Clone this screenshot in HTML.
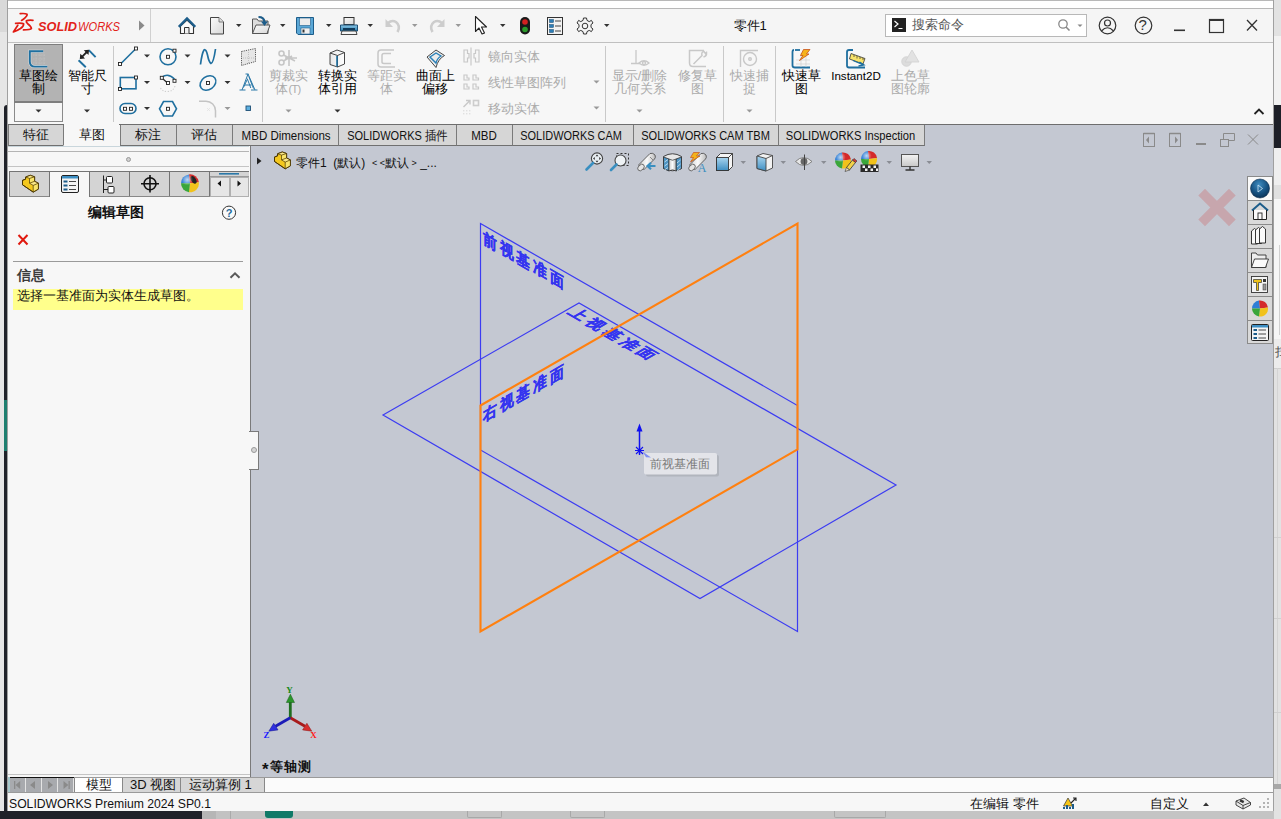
<!DOCTYPE html>
<html><head><meta charset="utf-8">
<style>
*{box-sizing:border-box;margin:0;padding:0}
html,body{width:1281px;height:819px;overflow:hidden;background:#e4e4e4;font-family:"Liberation Sans",sans-serif;font-size:12px;color:#000}
.a{position:absolute}
.t{position:absolute;white-space:nowrap;line-height:1}
</style></head><body>
<!-- desktop background -->
<div class="a" style="left:0;top:0;width:8px;height:32px;background:#d9d9d9"></div>
<div class="a" style="left:0;top:32px;width:8px;height:790px;background:#e6e6e6"></div>
<div class="a" style="left:4px;top:105px;width:4px;height:714px;background:#202229;border-radius:3px 0 0 0"></div>
<div class="a" style="left:4px;top:400px;width:4px;height:51px;background:#1e7f70"></div>
<div class="a" style="left:0;top:811px;width:1281px;height:8px;background:#c4c4c4"></div>
<div class="a" style="left:0;top:811px;width:202px;height:8px;background:#202229"></div>
<div class="a" style="left:202px;top:811px;width:14px;height:8px;background:#b6b6b6"></div>
<div class="a" style="left:216px;top:811px;width:14px;height:8px;background:#c2c2c2"></div>
<div class="a" style="left:230px;top:811px;width:1px;height:8px;background:#aaa"></div>
<div class="a" style="left:265px;top:811px;width:28px;height:7px;background:#107a68;border-radius:0 0 3px 3px"></div>
<div class="a" style="left:467px;top:810px;width:35px;height:8px;border:1px solid #a8a8a8;border-top:none;border-radius:0 0 2px 2px"></div>
<div class="a" style="left:570px;top:810px;width:35px;height:8px;border:1px solid #a8a8a8;border-top:none;border-radius:0 0 2px 2px"></div>
<div class="a" style="left:834px;top:810px;width:52px;height:8px;border:1px solid #a8a8a8;border-top:none;border-radius:0 0 2px 2px"></div>
<div class="a" style="left:1274px;top:0;width:7px;height:819px;background:#e2e2e2"></div>
<div class="a" style="left:1274px;top:36px;width:7px;height:69px;background:#f2f2f2"></div>
<div class="a" style="left:1274px;top:105px;width:7px;height:43px;background:#1e2028"></div>
<div class="a" style="left:1274px;top:148px;width:7px;height:37px;background:#efefef"></div>
<div class="a" style="left:1274px;top:185px;width:7px;height:14px;background:#e0e0e0"></div>
<div class="a" style="left:1274px;top:199px;width:7px;height:140px;background:#f6f6f6"></div>
<div class="a" style="left:1279px;top:245px;width:1px;height:90px;background:#d0d0d0"></div>
<div class="a" style="left:1274px;top:339px;width:7px;height:29px;background:#ececec"></div>
<div class="a" style="left:1274px;top:368px;width:7px;height:1px;background:#d0d0d0"></div>
<div class="a" style="left:1277px;top:368px;width:1px;height:420px;background:#d4d4d4"></div>
<div class="a" style="left:1274px;top:537px;width:7px;height:1px;background:#d0d0d0"></div>
<div class="a" style="left:1274px;top:618px;width:7px;height:1px;background:#d0d0d0"></div>
<div class="a" style="left:1274px;top:712px;width:7px;height:1px;background:#d0d0d0"></div>
<div class="a" style="left:1274px;top:784px;width:7px;height:5px;background:#a8a8a8"></div>
<div class="t" style="left:1275px;top:346px;font-size:12px;color:#555">扫</div>

<!-- window -->
<div class="a" style="left:7px;top:0;width:1267px;height:811px;background:#f5f5f5;border-left:1px solid #a0a0a0;border-right:1px solid #a0a0a0"></div>
<!-- top white strip -->
<div class="a" style="left:8px;top:0;width:1265px;height:9px;background:#fff;border-top:1px solid #b8b8b8;border-bottom:1px solid #b8b8b8"></div>

<!-- title row -->
<div id="titlerow" class="a" style="left:8px;top:9px;width:1265px;height:33px;background:#f5f5f5"></div>
<div class="a" style="left:150px;top:9px;width:1px;height:33px;background:#d0d0d0"></div>


<!-- title row content -->
<svg class="a" style="left:0;top:0" width="1281" height="42" viewBox="0 0 1281 42">
 <defs>
  <linearGradient id="gdoc" x1="0" y1="0" x2="1" y2="1"><stop offset="0" stop-color="#fafafa"/><stop offset="1" stop-color="#d8d8d8"/></linearGradient>
  <linearGradient id="gblue" x1="0" y1="0" x2="0" y2="1"><stop offset="0" stop-color="#8cc8e8"/><stop offset="1" stop-color="#2a7fb0"/></linearGradient>
 </defs>
 <!-- 3DS logo -->
 <g fill="none" stroke="#e01b12" stroke-width="1.7" stroke-linecap="round" stroke-linejoin="round">
  <path d="M20.2 13.6 Q25.5 13.2 27 14.2 Q27.6 15.6 25 17.8 Q23.5 19.3 21.5 20.4"/>
  <path d="M15.6 23.4 Q21.5 22.6 23.6 23.8 Q24 26 20.5 28.5 Q17 30.8 13.4 32 L17.8 25.3"/>
  <path d="M33 20.3 Q28 20 26.3 20.7 Q25.8 22 28 24 Q31.5 27 31.4 28.6 Q30.5 29.9 23.5 29.9"/>
 </g>
 <text x="38" y="31" font-family="Liberation Sans" font-size="13" font-weight="bold" font-style="italic" fill="#e2231a" textLength="39" lengthAdjust="spacingAndGlyphs">SOLID</text>
 <text x="78" y="31" font-family="Liberation Sans" font-size="13" font-style="italic" fill="#e2231a" textLength="42" lengthAdjust="spacingAndGlyphs">WORKS</text>
 <path d="M139 20.5 L144.5 25.5 L139 30.5 Z" fill="#8a8a8a"/>
 <!-- home -->
 <g transform="translate(178,17)">
  <path d="M2.5 16.5 V9 L9 3 L15.5 9 V16.5 Z" fill="#fafafa" stroke="#333" stroke-width="1.1"/>
  <path d="M0.8 9.8 L9 1.5 L17.2 9.8" fill="none" stroke="#1d5d8a" stroke-width="2.4" stroke-linejoin="miter"/>
  <path d="M6.5 16.5 V10.5 H11 V16.5" fill="#f0f0f0" stroke="#333" stroke-width="1"/>
 </g>
 <!-- new doc -->
 <path d="M210.5 17.5 H219 L223.5 22 V34 H210.5 Z" fill="url(#gdoc)" stroke="#444" stroke-width="1"/>
 <path d="M219 17.5 V22 H223.5" fill="#ddd" stroke="#666" stroke-width="0.8"/>
 <!-- open -->
 <g>
  <path d="M252.5 19 H257 L258.5 21 H268 V33.5 H252.5 Z" fill="#ddd" stroke="#555" stroke-width="1"/>
  <path d="M252.5 33.5 L256 25 H270 L267 33.5 Z" fill="url(#gdoc)" stroke="#555" stroke-width="1"/>
  <path d="M258.5 17 Q264 17 264.5 22" fill="none" stroke="#1d5d8a" stroke-width="2.2"/>
  <path d="M261 21.5 L264.5 26 L268 21.5 Z" fill="#1d5d8a"/>
 </g>
 <!-- save -->
 <g>
  <path d="M296.5 17.5 H313.5 V34.5 H298 L296.5 33 Z" fill="#5aa7d6" stroke="#1d5d8a" stroke-width="1"/>
  <rect x="299.5" y="18" width="11" height="7.5" fill="#ececec" stroke="#1d5d8a" stroke-width="0.6"/>
  <rect x="301" y="28" width="9" height="6" fill="#f0f0f0" stroke="#1d5d8a" stroke-width="0.6"/>
  <rect x="302.5" y="29.5" width="2" height="3" fill="#333"/>
 </g>
 <!-- print -->
 <g>
  <rect x="344" y="17.5" width="10" height="7" fill="url(#gdoc)" stroke="#333" stroke-width="1"/>
  <path d="M340.5 25 H357.5 V31 H340.5 Z" fill="url(#gblue)" stroke="#1d4f75" stroke-width="1"/>
  <rect x="343" y="28" width="12" height="2" fill="#0f3a5a"/>
  <path d="M342 31 H356 L357 34.5 H341 Z" fill="#f4f4f4" stroke="#333" stroke-width="0.9"/>
 </g>
 <!-- undo / redo -->
 <g fill="none" stroke="#cdcdcd" stroke-width="2.6">
  <path d="M388 23 Q392 19.5 396 22 Q401 26 397.5 32"/>
  <path d="M442 23 Q438 19.5 434 22 Q429 26 432.5 32"/>
 </g>
 <path d="M385.5 19 V27 H393 Z" fill="#cdcdcd"/>
 <path d="M444.5 19 V27 H437 Z" fill="#cdcdcd"/>
 <!-- select -->
 <path d="M475.5 16.5 V31.5 L479 28 L482 34 L484.5 33 L481.5 27 H486.5 Z" fill="#fff" stroke="#222" stroke-width="1.1" stroke-linejoin="round"/>
 <!-- traffic -->
 <rect x="520" y="17" width="10" height="17.5" rx="5" fill="#1a1a1a"/>
 <circle cx="525" cy="22" r="2.8" fill="#d42020"/>
 <circle cx="525" cy="29.5" r="2.8" fill="#2a9a2a"/>
 <!-- list -->
 <rect x="547.5" y="17.5" width="15" height="17" fill="#f2f2f2" stroke="#333" stroke-width="1"/>
 <g fill="#2d7cb5" stroke="#14486e" stroke-width="0.5"><rect x="549.5" y="19.5" width="4" height="3"/><rect x="549.5" y="24.5" width="4" height="3"/><rect x="549.5" y="29.5" width="4" height="3"/></g>
 <g stroke="#444" stroke-width="1"><path d="M555 21 H561 M555 26 H561 M555 31 H561"/></g>
 <!-- gear -->
 <g transform="translate(585,26)">
  <path d="M-1.5 -8 H1.5 L2 -5.6 L4.2 -4.4 L6.4 -5.6 L8 -3 L6 -1.4 V1.4 L8 3 L6.4 5.6 L4.2 4.4 L2 5.6 L1.5 8 H-1.5 L-2 5.6 L-4.2 4.4 L-6.4 5.6 L-8 3 L-6 1.4 V-1.4 L-8 -3 L-6.4 -5.6 L-4.2 -4.4 L-2 -5.6 Z" fill="#f4f4f4" stroke="#333" stroke-width="1" stroke-linejoin="round"/>
  <circle r="2.8" fill="#f4f4f4" stroke="#333" stroke-width="1"/>
 </g>
 <!-- dropdown arrows -->
 <g fill="#333">
  <path d="M236 24 H241.5 L238.75 27 Z"/><path d="M280 24 H285.5 L282.75 27 Z"/><path d="M326 24 H331.5 L328.75 27 Z"/>
  <path d="M367.5 24 H373 L370.25 27 Z"/><path d="M500 24 H505.5 L502.75 27 Z"/><path d="M604 24 H609.5 L606.75 27 Z"/>
 </g>
 <g fill="#999"><path d="M412 24 H417.5 L414.75 27 Z"/><path d="M455.5 24 H461 L458.25 27 Z"/></g>
 <!-- search box -->
 <rect x="885.5" y="14.5" width="201" height="22" fill="#fff" stroke="#b8b8b8" stroke-width="1"/>
 <rect x="892" y="18" width="14" height="14" fill="#222"/>
 <path d="M894.5 21 L898 24 L894.5 27" fill="none" stroke="#fff" stroke-width="1.2"/>
 <path d="M898.5 28.5 H902.5" stroke="#fff" stroke-width="1"/>
 <circle cx="1063" cy="24" r="4.2" fill="none" stroke="#888" stroke-width="1.3"/>
 <path d="M1066 27 L1069.5 30.5" stroke="#888" stroke-width="1.6"/>
 <path d="M1077.5 24.5 H1082.5 L1080 27 Z" fill="#888"/>
 <!-- user/help -->
 <circle cx="1107.5" cy="25.5" r="8.3" fill="none" stroke="#333" stroke-width="1.2"/>
 <circle cx="1107.5" cy="23" r="3" fill="none" stroke="#333" stroke-width="1.2"/>
 <path d="M1101.5 31 Q1107.5 24.5 1113.5 31" fill="none" stroke="#333" stroke-width="1.2"/>
 <circle cx="1143.5" cy="25.5" r="8.3" fill="none" stroke="#333" stroke-width="1.2"/>
 <!-- min max close -->
 <rect x="1174" y="29.5" width="11" height="1.6" fill="#333"/>
 <rect x="1209.5" y="19.5" width="14" height="13" fill="none" stroke="#333" stroke-width="1.2"/>
 <rect x="1209.5" y="19" width="14" height="2" fill="#333"/>
 <path d="M1247 20 L1257 30.5 M1257 20 L1247 30.5" stroke="#333" stroke-width="1.3"/>
</svg>
<div class="t" style="left:733.5px;top:18.5px;font-size:13px;color:#111">零件1</div>
<div class="t" style="left:912px;top:18px;font-size:13px;color:#555">搜索命令</div>
<div class="t" style="left:1138.5px;top:17px;font-size:15px;color:#333">?</div>

<!-- ribbon -->
<div id="ribbon" class="a" style="left:8px;top:42px;width:1265px;height:83px;background:#f7f7f7;border-top:1px solid #c0c0c0;border-bottom:1px solid #6e6e6e"></div>


<!-- ribbon content -->
<div class="a" style="left:14px;top:44px;width:49px;height:59px;background:#b3b3b3;border:1px solid #7e7e7e;border-bottom:2px solid #7e7e7e"></div>
<div class="a" style="left:14px;top:103px;width:49px;height:19px;background:#f6f6f6;border:1px solid #8a8a8a;border-top:none"></div>
<div class="t" style="left:-1.5px;width:80px;text-align:center;top:70.2px;font-size:12.8px;color:#000">草图绘</div>
<div class="t" style="left:-1.5px;width:80px;text-align:center;top:83.1px;font-size:12.8px;color:#000">制</div>
<div class="t" style="left:47px;width:80px;text-align:center;top:70.2px;font-size:12.8px;color:#000">智能尺</div>
<div class="t" style="left:47px;width:80px;text-align:center;top:83.1px;font-size:12.8px;color:#000">寸</div>
<div class="t" style="left:248px;width:80px;text-align:center;top:70.2px;font-size:12.8px;color:#ababab">剪裁实</div>
<div class="t" style="left:248px;width:80px;text-align:center;top:83.1px;font-size:12.8px;color:#ababab">体<span style="font-size:11px;letter-spacing:-0.6px;vertical-align:0.5px">(T)</span></div>
<div class="t" style="left:297px;width:80px;text-align:center;top:70.2px;font-size:12.8px;color:#000">转换实</div>
<div class="t" style="left:297px;width:80px;text-align:center;top:83.1px;font-size:12.8px;color:#000">体引用</div>
<div class="t" style="left:346px;width:80px;text-align:center;top:70.2px;font-size:12.8px;color:#ababab">等距实</div>
<div class="t" style="left:346px;width:80px;text-align:center;top:83.1px;font-size:12.8px;color:#ababab">体</div>
<div class="t" style="left:395px;width:80px;text-align:center;top:70.2px;font-size:12.8px;color:#000">曲面上</div>
<div class="t" style="left:395px;width:80px;text-align:center;top:83.1px;font-size:12.8px;color:#000">偏移</div>
<div class="t" style="left:599.5px;width:80px;text-align:center;top:70.2px;font-size:12.8px;color:#ababab">显示/删除</div>
<div class="t" style="left:599.5px;width:80px;text-align:center;top:83.1px;font-size:12.8px;color:#ababab">几何关系</div>
<div class="t" style="left:657px;width:80px;text-align:center;top:70.2px;font-size:12.8px;color:#ababab">修复草</div>
<div class="t" style="left:657px;width:80px;text-align:center;top:83.1px;font-size:12.8px;color:#ababab">图</div>
<div class="t" style="left:709.5px;width:80px;text-align:center;top:70.2px;font-size:12.8px;color:#ababab">快速捕</div>
<div class="t" style="left:709.5px;width:80px;text-align:center;top:83.1px;font-size:12.8px;color:#ababab">捉</div>
<div class="t" style="left:761.5px;width:80px;text-align:center;top:70.2px;font-size:12.8px;color:#000">快速草</div>
<div class="t" style="left:761.5px;width:80px;text-align:center;top:83.1px;font-size:12.8px;color:#000">图</div>
<div class="t" style="left:816px;width:80px;text-align:center;top:70px;font-size:11.6px;color:#000">Instant2D</div>
<div class="t" style="left:870.5px;width:80px;text-align:center;top:70.2px;font-size:12.8px;color:#ababab">上色草</div>
<div class="t" style="left:870.5px;width:80px;text-align:center;top:83.1px;font-size:12.8px;color:#ababab">图轮廓</div>
<div class="t" style="left:488px;top:50px;font-size:13px;color:#ababab">镜向实体</div>
<div class="t" style="left:488px;top:76px;font-size:13px;color:#ababab">线性草图阵列</div>
<div class="t" style="left:488px;top:102px;font-size:13px;color:#ababab">移动实体</div>
<svg class="a" style="left:0;top:42px" width="1281" height="83" viewBox="0 42 1281 83">
 <defs>
  <linearGradient id="gcube" x1="0" y1="0" x2="1" y2="0"><stop offset="0" stop-color="#e8e8e8"/><stop offset="1" stop-color="#ffffff"/></linearGradient>
 </defs>
 <!-- separators -->
 <g fill="#c9c9c9"><rect x="113" y="46" width="1" height="76"/><rect x="262" y="46" width="1" height="76"/><rect x="605" y="46" width="1" height="76"/><rect x="723" y="46" width="1" height="76"/><rect x="775" y="46" width="1" height="76"/></g>
 <!-- dropdown arrows black -->
 <g fill="#333">
  <path d="M35.5 109.5 H41.5 L38.5 112.5 Z"/><path d="M84 109.5 H90 L87 112.5 Z"/><path d="M334.5 109.5 H340.5 L337.5 112.5 Z"/>
  <path d="M144 54.5 H150 L147 57.5 Z"/><path d="M184.5 54.5 H190.5 L187.5 57.5 Z"/><path d="M224.5 54.5 H230.5 L227.5 57.5 Z"/>
  <path d="M144 81 H150 L147 84 Z"/><path d="M184.5 81 H190.5 L187.5 84 Z"/><path d="M224.5 81 H230.5 L227.5 84 Z"/>
  <path d="M144 107 H150 L147 110 Z"/>
 </g>
 <g fill="#999">
  <path d="M285.5 109.5 H291.5 L288.5 112.5 Z"/><path d="M636.5 109.5 H642.5 L639.5 112.5 Z"/><path d="M746.5 109.5 H752.5 L749.5 112.5 Z"/>
  <path d="M593.5 80.5 H599.5 L596.5 83.5 Z"/><path d="M593.5 106.5 H599.5 L596.5 109.5 Z"/><path d="M224.5 107 H230.5 L227.5 110 Z"/>
 </g>
 <path d="M1254.5 114 L1259 109.5 L1263.5 114" fill="none" stroke="#222" stroke-width="1.8"/>
 <!-- sketch icon -->
 <g>
  <g stroke="#c9c9c9" stroke-width="0.6" stroke-dasharray="0.8 0.8"><path d="M33 55 H46 M33 59 H46 M33 63 H46 M36 52 V66 M40 52 V66 M44 52 V66"/></g>
  <path d="M43.2 51.2 H29.8 V61.5 Q29.8 66.6 34.8 66.6 H47.3" fill="none" stroke="#fafafa" stroke-width="3" opacity="0.6"/>
  <path d="M43.2 51.2 H29.8 V61.5 Q29.8 66.6 34.8 66.6 H47.3" fill="none" stroke="#1f70a0" stroke-width="1.9"/>
 </g>
 <!-- smart dim -->
 <g>
  <path d="M88.8 50.2 L95.6 57.2" stroke="#1f6f9f" stroke-width="1.9"/>
  <path d="M78.6 60.2 L85.8 67.3" stroke="#1f6f9f" stroke-width="1.9"/>
  <path d="M81 57.8 L87.8 51" stroke="#222" stroke-width="1.8"/>
  <path d="M79.8 59 L80.3 53.8 L85 58.5 Z M89 49.8 L83.8 50.3 L88.5 55 Z" fill="#222"/>
 </g>
 <!-- line -->
 <path d="M120 64.5 L135.5 49" stroke="#1f6f9f" stroke-width="1.6"/>
 <g fill="#fff" stroke="#222" stroke-width="0.9"><rect x="118.5" y="62.5" width="3" height="3"/><rect x="134.5" y="47" width="3" height="3"/></g>
 <!-- circle -->
 <circle cx="168" cy="56.8" r="8" fill="none" stroke="#1f6f9f" stroke-width="1.6"/>
 <g fill="#fff" stroke="#222" stroke-width="0.9"><rect x="166.5" y="55.3" width="3" height="3"/><rect x="173" y="49.2" width="3" height="3"/></g>
 <!-- spline -->
 <path d="M200.5 64.5 Q202 53 204 50 Q206 48.5 207.5 55 Q209 62.5 211 63.5 Q213.5 63 215.5 49" fill="none" stroke="#1f6f9f" stroke-width="1.7"/>
 <!-- plane icon -->
 <path d="M241.5 51.5 L255.5 48.5 V61.5 L241.5 65.5 Z" fill="#e6e6e6" stroke="#333" stroke-width="0.8" stroke-dasharray="1.2 1"/>
 <path d="M248.5 50 V64 M243 58 H254" stroke="#aaa" stroke-width="0.6" stroke-dasharray="1 1"/>
 <!-- rectangle -->
 <rect x="120.3" y="77.5" width="15.7" height="11.3" fill="none" stroke="#1f6f9f" stroke-width="1.6"/>
 <g fill="#fff" stroke="#222" stroke-width="0.9"><rect x="118.5" y="87.5" width="3" height="3"/><rect x="134.5" y="76" width="3" height="3"/></g>
 <!-- arc -->
 <path d="M162 77.2 Q168 72.5 174.5 79" fill="none" stroke="#1f6f9f" stroke-width="1.5"/>
 <path d="M160.5 88 Q163 92 168 91.5 Q173 91.5 175 86" fill="none" stroke="#cfcfcf" stroke-width="1.2" stroke-dasharray="1.2 1.6"/>
 <path d="M162 78 L167.5 83" stroke="#222" stroke-width="1.1"/>
 <g fill="#fff" stroke="#222" stroke-width="0.9"><rect x="160.3" y="76.3" width="3" height="3"/><rect x="166.5" y="81.5" width="3" height="3"/><rect x="173" y="79.3" width="3" height="3"/></g>
 <!-- ellipse -->
 <ellipse cx="208" cy="83" rx="8.5" ry="6.5" transform="rotate(-35 208 83)" fill="none" stroke="#1f6f9f" stroke-width="1.6"/>
 <rect x="206.5" y="81.5" width="3" height="3" fill="#fff" stroke="#222" stroke-width="0.9"/>
 <!-- A -->
 <g fill="none" stroke="#2a78a8" stroke-width="1">
  <path d="M239.5 90 H245.5 M251 90 H257.5 M242 90 L248 74 L255 90 M245.5 74 H248.5 M244.5 85 H251.5"/>
  <path d="M248.8 76.5 L253.5 88.5 M247.2 78.5 L250.8 88 M243.5 87.5 L247 80"/>
 </g>
 <!-- slot -->
 <rect x="120" y="103.5" width="16" height="10" rx="5" fill="none" stroke="#1f6f9f" stroke-width="1.6"/>
 <g fill="#fff" stroke="#222" stroke-width="0.9"><rect x="123.5" y="107.3" width="3" height="3"/><rect x="129.5" y="107.3" width="3" height="3"/></g>
 <!-- polygon -->
 <path d="M163.5 101.5 H172.5 L176.5 108.8 L172.5 116 H163.5 L159.5 108.8 Z" fill="none" stroke="#1f6f9f" stroke-width="1.6"/>
 <rect x="166.5" y="107.3" width="3" height="3" fill="#fff" stroke="#222" stroke-width="0.9"/>
 <!-- fillet gray -->
 <path d="M199 101.2 H206 A9.5 9.5 0 0 1 215.5 110.7 V117.5" fill="none" stroke="#c4c4c4" stroke-width="1.5"/>
 <path d="M207 108 L210 111 M210 108 L207 111" stroke="#e2e2e2" stroke-width="0.8"/>
 <!-- point -->
 <rect x="246" y="106" width="4.5" height="4.5" fill="#5eb0e0" stroke="#1d4f75" stroke-width="0.9"/>
 <!-- trim (gray scissors) -->
 <g fill="none" stroke="#c6c6c6" stroke-width="1.6">
  <circle cx="281.5" cy="53.5" r="2.5"/><circle cx="281.5" cy="62.5" r="2.5"/>
  <path d="M283.5 55 L295 61 M283.5 61 L292 56 M289 50 V66 M285 58 H297"/>
 </g>
 <!-- convert entities cube -->
 <path d="M330 53 L337 50 L344.5 52.5 V64 L337.5 67 L330 64.5 Z" fill="url(#gcube)" stroke="#333" stroke-width="0.9"/>
 <path d="M330 53 L337.5 55.5 L344.5 52.5 M337.5 55.5 V67" fill="none" stroke="#333" stroke-width="0.9"/>
 <path d="M337 56 V66.5" stroke="#1f6f9f" stroke-width="1.6"/>
 <!-- offset gray -->
 <path d="M394 50 H381 Q378 50 378 53 V64 Q378 67 381 67 H395" fill="none" stroke="#c8c8c8" stroke-width="1.5"/>
 <path d="M391 53.5 H384 Q382 53.5 382 55.5 V62 Q382 63.5 384 63.5 H391" fill="none" stroke="#c8c8c8" stroke-width="1.5"/>
 <!-- offset on surface -->
 <path d="M427 57 L436 50 L444.5 55.5 Q438 59 436 67.5 Z" fill="#ececec" stroke="#333" stroke-width="0.9"/>
 <path d="M430 57 L436 53 L441 56 Q437 58.5 436 63 Z" fill="none" stroke="#2a80b8" stroke-width="1.4"/>
 <!-- mirror gray -->
 <g fill="none" stroke="#c8c8c8" stroke-width="1.2">
  <path d="M471 47.5 V65.5"/><path d="M464 50 H467.5 V53.5 H469 V58 H467.5 V62 H464 Z"/><path d="M479 50 H475.5 V53.5 H474 V58 H475.5 V62 H479 Z"/>
 </g>
 <!-- linear pattern gray -->
 <g fill="none" stroke="#c8c8c8" stroke-width="1.2">
  <path d="M464 75 H467 V78 H469 V80 H464 Z"/><path d="M473 75 H476 V78 H478.5 V80 H473 Z"/><path d="M464 84 H467 V87 H469 V89 H464 Z"/><path d="M473 84 H476 V87 H478.5 V89 H473 Z"/>
 </g>
 <!-- move gray -->
 <path d="M463.5 107 L470 100.5 M466 100.5 H470 V104.5" fill="none" stroke="#c8c8c8" stroke-width="1.4"/>
 <rect x="473.5" y="100.5" width="5" height="5" fill="none" stroke="#cdcdcd" stroke-width="1.6"/>
 <g fill="#e0e0e0"><rect x="463" y="110" width="1.4" height="1.4"/><rect x="466" y="110" width="1.4" height="1.4"/><rect x="469" y="110" width="1.4" height="1.4"/><rect x="463" y="113" width="1.4" height="1.4"/><rect x="466" y="113" width="1.4" height="1.4"/><rect x="469" y="113" width="1.4" height="1.4"/></g>
 <!-- display/delete relations gray -->
 <g fill="none" stroke="#c8c8c8" stroke-width="1.3">
  <path d="M636 50 V63.5 M631 63.5 H640"/>
  <path d="M639 63 Q644 58.5 649 63 Q644 67.5 639 63 Z"/><circle cx="644" cy="63" r="1.5"/>
 </g>
 <!-- repair sketch gray -->
 <g fill="none" stroke="#c8c8c8" stroke-width="1.5">
  <path d="M704 50.5 H689.5 V63 Q689.5 66.5 693 66.5 H706"/>
  <path d="M693.5 64 L702 55.5 Q701 52 704 51.5 L705.5 53.5 L706.5 52.5 Q707 56 703.5 57"/>
 </g>
 <!-- quick snap gray -->
 <g fill="none" stroke="#c8c8c8" stroke-width="1.4">
  <path d="M740.5 67 V50.5 H758"/><circle cx="750" cy="59" r="6.5"/><circle cx="750" cy="59" r="1.3"/>
 </g>
 <!-- quick sketch -->
 <path d="M794 50 Q792.5 50 792.5 52 V65.5 Q792.5 67.5 795 67.5 H810" fill="none" stroke="#1f6f9f" stroke-width="1.8"/>
 <path d="M800 50 H795" stroke="#1f6f9f" stroke-width="1.8"/>
 <g stroke="#d0d0d0" stroke-width="0.7"><path d="M796 60 H810 M796 64 H810 M801 53 V67 M806 53 V67"/></g>
 <path d="M803.5 49.5 H810 L806.5 54 H809 L799.5 60.5 L803 55.5 H800.5 Z" fill="#f6b21b" stroke="#c2410c" stroke-width="0.7"/>
 <!-- instant2D -->
 <path d="M853 50 H849 Q847 50 847 52 V65.5 Q847 67.5 849 67.5 H865" fill="none" stroke="#1f6f9f" stroke-width="1.8"/>
 <path d="M851 53.5 L865 58.5 L863 64 L849.5 59 Z" fill="#f8e36a" stroke="#333" stroke-width="0.8"/>
 <path d="M854 55 V57 M857 56 V58.5 M860 57 V59 M863 58 V60" stroke="#333" stroke-width="0.7"/>
 <path d="M853 60.5 L862.5 64.5 M859.5 62 L864 65 L858.5 66" fill="none" stroke="#1f6f9f" stroke-width="1.3"/>
 <!-- shaded sketch gray -->
 <circle cx="906.5" cy="61.5" r="4.8" fill="#dcdcdc" stroke="#d0d0d0" stroke-width="0.8"/>
 <path d="M912 50 L919 62 H905 Z" fill="#e2e2e2" stroke="#d0d0d0" stroke-width="0.8"/>
</svg>
<!-- viewport -->
<div id="vp" class="a" style="left:251px;top:125px;width:1022px;height:653px;background:#c4c8d2"></div>


<!-- viewport content -->
<svg class="a" style="left:0;top:0" width="1281" height="819" viewBox="0 0 1281 819">
 <defs>
  <linearGradient id="gcyl" x1="0" y1="0" x2="1" y2="0"><stop offset="0" stop-color="#cfcfcf"/><stop offset="0.5" stop-color="#fafafa"/><stop offset="1" stop-color="#bdbdbd"/></linearGradient>
  <linearGradient id="gbox" x1="0" y1="0" x2="0" y2="1"><stop offset="0" stop-color="#a8d4ee"/><stop offset="1" stop-color="#3f8fc2"/></linearGradient>
  <radialGradient id="gglobe" cx="0.45" cy="0.3" r="0.75"><stop offset="0" stop-color="#3f8cc0"/><stop offset="0.6" stop-color="#15507f"/><stop offset="1" stop-color="#0a2f52"/></radialGradient>
 </defs>
 <!-- planes -->
 <g fill="none" stroke="#3c3cf2" stroke-width="1.2">
  <path d="M480.5 223.5 L797.5 405.5 V631.5 L480.5 450 Z"/>
  <path d="M383 415 L579 303 L896 485 L700 598.5 Z"/>
 </g>
 <g font-family="Liberation Sans" font-weight="bold" font-size="16" fill="#3434f0" stroke="#3434f0" stroke-width="0.3" letter-spacing="3.2">
  <g transform="matrix(0.8673 0.4977 0 1 480.5 223.5)"><text x="3" y="17.8">前视基准面</text></g>
  <g transform="matrix(0.8673 -0.4977 0 1 480.5 405.5)"><text x="3" y="17.8">右视基准面</text></g>
  <g transform="matrix(0.8676 0.4973 -0.8684 0.4958 579 303)"><text x="3.5" y="17.3" letter-spacing="3.7">上视基准面</text></g>
 </g>
 <path d="M480.5 405.5 L797.5 223.5 V449.5 L480.5 631.5 Z" fill="none" stroke="#ff8010" stroke-width="2.1"/>
 <!-- origin -->
 <path d="M639.5 454.5 V430" stroke="#1010f0" stroke-width="1.5"/>
 <path d="M636.5 431.5 L639.5 423.5 L642.5 431.5 Z" fill="#1010f0"/>
 <path d="M636 447 L643 454 M643 447 L636 454 M635 450.5 H644 M639.5 446 V455" stroke="#1010f0" stroke-width="1.1"/>
 <!-- tooltip -->
 <rect x="646" y="455" width="73" height="21.5" rx="2" fill="#9ea1a8" opacity="0.5"/>
 <rect x="644" y="453" width="73" height="21.5" rx="2" fill="#e3e4e9"/>
 <path d="M642.5 451.5 L651 457.5 L646 457.2 Z" fill="#8090f0"/>
 <!-- triad -->
 <path d="M290.3 718 V699" stroke="#1e6e1e" stroke-width="2.8"/>
 <path d="M286.3 702.5 L290.4 694.2 L294.5 702.5 Z" fill="#2a962a" stroke="#1a5a1a" stroke-width="0.5"/>
 <path d="M290.3 717.7 L305 726.2" stroke="#a81c1c" stroke-width="2.8"/>
 <path d="M311.8 731.2 L302.6 729.9 L306.9 723.3 Z" fill="#d83030" stroke="#8a1010" stroke-width="0.5"/>
 <path d="M290.3 717.7 L275.5 726.2" stroke="#1c1cb8" stroke-width="2.8"/>
 <path d="M268.8 731.2 L278 729.9 L273.7 723.3 Z" fill="#3030e0" stroke="#10108a" stroke-width="0.5"/>
 <text x="289.5" y="693" text-anchor="middle" font-family="Liberation Serif" font-weight="bold" font-size="9" fill="#1a8a1a">Y</text>
 <text x="266.5" y="737.5" text-anchor="middle" font-family="Liberation Serif" font-weight="bold" font-size="9" fill="#1a1aff">Z</text>
 <text x="313.5" y="737.5" text-anchor="middle" font-family="Liberation Serif" font-weight="bold" font-size="9" fill="#ff1a1a">X</text>
 <!-- faded X -->
 <path d="M1205 195.5 L1229 219.5 M1229 195.5 L1205 219.5" stroke="#c7a6ad" stroke-width="9.5" stroke-linecap="square"/>
 <!-- doc window controls -->
 <g fill="none" stroke="#8a8a8a" stroke-width="1">
  <rect x="1143.5" y="133.5" width="11" height="13"/><rect x="1169.5" y="133.5" width="11" height="13"/>
  <rect x="1220.5" y="139.5" width="8" height="7"/><path d="M1223.5 139.5 V133.5 H1234.5 V140.5 H1228.5"/>
  <path d="M1248 134.5 L1258 144.5 M1258 134.5 L1248 144.5"/>
 </g>
 <path d="M1143.5 133.5 H1154.5 M1169.5 133.5 H1180.5" stroke="#8a8a8a" stroke-width="1.6"/>
 <path d="M1149 136.5 L1146 140 L1149 143.5 Z M1175 136.5 L1178 140 L1175 143.5 Z" fill="#8a8a8a"/>
 <rect x="1196" y="143" width="10" height="2" fill="#8a8a8a"/>
 <!-- heads-up toolbar -->
 <g>
  <!-- zoom fit -->
  <circle cx="597" cy="158.5" r="5.6" fill="#e8eef2" stroke="#444" stroke-width="1.1"/>
  <path d="M593 163 L586.5 169.5" stroke="#3a8fc0" stroke-width="2.6" stroke-linecap="round"/>
  <path d="M597 154.5 L595.5 156.3 H598.5 Z M597 162.5 L595.5 160.7 H598.5 Z M593 158.5 L594.8 157 V160 Z M601 158.5 L599.2 157 V160 Z" fill="#333"/>
  <!-- zoom area -->
  <rect x="616.5" y="153.5" width="12" height="12" fill="none" stroke="#333" stroke-width="1" stroke-dasharray="2 2"/>
  <circle cx="620.5" cy="160.5" r="5.5" fill="#eef2f5" stroke="#444" stroke-width="1.1"/>
  <path d="M616.5 164.5 L611 170" stroke="#3a8fc0" stroke-width="2.6" stroke-linecap="round"/>
  <!-- previous view -->
  <path d="M638.5 165 L650 153.5 Q653 152.5 655 155 Q656 157.5 654.5 159 L643.5 170 Z" fill="url(#gcyl)" stroke="#555" stroke-width="0.9"/>
  <ellipse cx="641" cy="167.5" rx="2.6" ry="3.8" transform="rotate(45 641 167.5)" fill="#e4e4e4" stroke="#555" stroke-width="0.8"/>
  <path d="M650 157 L653 160" stroke="#666" stroke-width="0.7"/>
  <path d="M655.5 166 H648 M651 162.8 L647.5 166 L651 169.2" fill="none" stroke="#3a8fc0" stroke-width="2.2"/>
  <!-- section view -->
  <path d="M663.5 156.5 Q672.5 151 681.5 156.5 V168.5 Q672.5 173 663.5 168.5 Z" fill="#e8e8e8" stroke="#333" stroke-width="0.9"/>
  <path d="M663.5 157 L669 159 V171 L663.5 168.5 Z M676 159 L681.5 157 V168.5 L676 171 Z" fill="#4f95c4" stroke="#333" stroke-width="0.8"/>
  <path d="M664.5 162 L668 159.5 M664.5 166 L668 163.5 M664.5 170 L668 167.5 M677 163 L680.5 160 M677 167 L680.5 164 M677 171 L680.5 168" stroke="#cfe6f5" stroke-width="0.8"/>
  <path d="M669 159 Q672.5 161.5 676 159 V171 Q672.5 168.5 669 171 Z" fill="url(#gcyl)" stroke="#333" stroke-width="0.7"/>
  <!-- dynamic annotation -->
  <path d="M689.5 165 L701 153.5 Q704 152.5 706 155 Q707 157.5 705.5 159 L694.5 170 Z" fill="url(#gcyl)" stroke="#555" stroke-width="0.9"/>
  <ellipse cx="692" cy="167.5" rx="2.6" ry="3.8" transform="rotate(45 692 167.5)" fill="#e4e4e4" stroke="#555" stroke-width="0.8"/>
  <path d="M693.5 152.5 H699.5 L696.5 156 H700 L690.5 162 L693.5 157.5 H690.5 Z" fill="#f4b31c" stroke="#c2410c" stroke-width="0.6"/>
  <text x="702" y="172" text-anchor="middle" font-family="Liberation Serif" font-size="12" fill="#3a8fc0">A</text>
  <!-- view orientation -->
  <path d="M716.5 157.5 L720.5 153.5 H732.5 V166.5 L728.5 170.5 H716.5 Z" fill="#f4f4f4" stroke="#333" stroke-width="0.9"/>
  <rect x="716.5" y="157.5" width="12" height="13" fill="url(#gbox)" stroke="#333" stroke-width="0.9"/>
  <path d="M728.5 157.5 L732.5 153.5" stroke="#333" stroke-width="0.9"/>
  <!-- display style -->
  <path d="M757 156 L763 153.5 L772.5 155.5 V168 L766 171 L757 168.5 Z" fill="#f2f2f2" stroke="#444" stroke-width="0.9"/>
  <path d="M757 156 L766 158.5 V171 L757 168.5 Z" fill="url(#gbox)" stroke="#444" stroke-width="0.9"/>
  <path d="M766 158.5 L772.5 155.5" stroke="#444" stroke-width="0.9"/>
  <!-- eye -->
  <path d="M795.5 161.5 Q803.5 153.5 812 161.5 Q803.5 169.5 795.5 161.5 Z" fill="#e6e6e6" stroke="#777" stroke-width="0.9"/>
  <circle cx="804" cy="161.5" r="3.4" fill="#666"/>
  <path d="M804.5 154.5 V170" stroke="#444" stroke-width="1"/>
  <!-- edit appearance -->
  <g transform="translate(843,160.5)">
   <path d="M0 0 L-8 0 A8 8 0 0 1 -1 -8 Z" fill="#2f7fd6"/><path d="M0 0 L-1 -8 A8 8 0 0 1 8 -1 Z" fill="#d42a2a"/>
   <path d="M0 0 L8 -1 A8 8 0 0 1 -1 8 Z" fill="#f1c21b"/><path d="M0 0 L-1 8 A8 8 0 0 1 -8 0 Z" fill="#3aa63a"/>
   <circle r="8" fill="url(#gball)"/>
  </g>
  <path d="M846.5 167.5 L852.5 160 L855.5 162.5 L849.5 170 Z" fill="#f2d24a" stroke="#333" stroke-width="0.8"/>
  <path d="M852.5 160 L854 158.5 L857 161 L855.5 162.5 Z" fill="#d83a3a" stroke="#333" stroke-width="0.6"/>
  <path d="M846.5 167.5 L845 171.5 L849.5 170 Z" fill="#f0e0c0" stroke="#333" stroke-width="0.6"/>
  <!-- apply scene -->
  <g transform="translate(869,159)">
   <path d="M0 0 L-8 0 A8 8 0 0 1 -1 -8 Z" fill="#2f7fd6"/><path d="M0 0 L-1 -8 A8 8 0 0 1 8 -1 Z" fill="#d42a2a"/>
   <path d="M0 0 L8 -1 A8 8 0 0 1 -1 8 Z" fill="#f1c21b"/><path d="M0 0 L-1 8 A8 8 0 0 1 -8 0 Z" fill="#3aa63a"/>
   <circle r="8" fill="url(#gball)"/>
  </g>
  <rect x="860.5" y="164.5" width="18" height="7.5" fill="#2a2a2a"/>
  <g fill="#f2f2f2"><rect x="862.5" y="165.5" width="2.5" height="2.5"/><rect x="868" y="165.5" width="2.5" height="2.5"/><rect x="873.5" y="165.5" width="2.5" height="2.5"/><rect x="865" y="168.5" width="2.5" height="2.5"/><rect x="870.5" y="168.5" width="2.5" height="2.5"/><rect x="876" y="168.5" width="2" height="2.5"/></g>
  <g transform="translate(869,159)"><path d="M-8 0 A8 8 0 0 0 8 0 Z" fill="#3aa63a" opacity="0"/></g>
  <!-- monitor -->
  <defs><linearGradient id="gmon" x1="0" y1="0" x2="0" y2="1"><stop offset="0" stop-color="#f4f4f4"/><stop offset="1" stop-color="#c8c8c8"/></linearGradient></defs>
  <rect x="901.5" y="154.5" width="17" height="12" fill="url(#gmon)" stroke="#555" stroke-width="1"/>
  <path d="M910 166.5 V169.5 M905.5 170 H914.5" stroke="#333" stroke-width="1.4"/>
  <!-- arrows -->
  <g fill="#8a8d94">
   <path d="M740.5 161 H746 L743.25 164 Z"/><path d="M780.5 161 H786 L783.25 164 Z"/><path d="M821 161 H826.5 L823.75 164 Z"/>
   <path d="M886.5 161 H892 L889.25 164 Z"/><path d="M926.5 161 H932 L929.25 164 Z"/>
  </g>
 </g>
 <!-- tree header -->
 <path d="M257 157.5 L261.5 161 L257 164.5 Z" fill="#222"/>
 <g transform="translate(-1.0,-0.3)" stroke="#4a3600" stroke-width="0.9" stroke-linejoin="round">
  <path d="M275.5 157.3 L278.5 156.2 L278.7 154 L283.3 152.3 L287.6 153.8 V158.3 L291.4 160.2 V166.1 L286.2 169.1 L275.5 161.8 Z" fill="#f4c81e"/>
  <path d="M278.7 154 L282.5 155.4 L287.6 153.8 L283.3 152.3 Z" fill="#fbe88a" stroke="none"/>
  <path d="M282.5 155.4 L287.6 153.8 V158.3 L282.5 160.2 Z" fill="#f9e46a" stroke="none"/>
  <path d="M282.5 160.2 L287.6 158.3 L291.4 160.2 L286.2 162.4 Z" fill="#fbe88a" stroke="none"/>
  <path d="M286.2 162.4 L291.4 160.2 V166.1 L286.2 169.1 Z" fill="#f9e46a" stroke="none"/>
  <path d="M275.5 157.3 L278.5 156.2 L278.7 154 L283.3 152.3 L287.6 153.8 V158.3 L291.4 160.2 V166.1 L286.2 169.1 L275.5 161.8 Z" fill="none"/>
  <path d="M278.7 154 L282.5 155.4 L287.6 153.8 M282.5 155.4 V160.2 L286.2 162.4 L291.4 160.2 M286.2 162.4 V169.1 M282.5 160.2 L287.6 158.3" fill="none" stroke-width="0.7"/>
 </g>
 <!-- right task pane strip -->
 <rect x="1247.5" y="176.5" width="25" height="167" fill="#d9d9d9" stroke="#8a8a8a" stroke-width="1"/>
 <rect x="1248" y="177" width="24" height="23" fill="#fafafa"/>
 <g stroke="#8a8a8a" stroke-width="1"><path d="M1248 200.5 H1272 M1248 224.5 H1272 M1248 248.5 H1272 M1248 272.5 H1272 M1248 296.5 H1272 M1248 320.5 H1272"/></g>
 <circle cx="1260" cy="188.5" r="9.5" fill="url(#gglobe)" stroke="#0a2a4a" stroke-width="0.6"/>
 <path d="M1258 185 L1262.5 188.5 L1258 192 Z" fill="none" stroke="#cfe6f5" stroke-width="0.8"/>
 <g>
  <path d="M1252 210.5 L1260 203.5 L1268 210.5" fill="none" stroke="#1d5d8a" stroke-width="2"/>
  <path d="M1253.5 210 V219.5 H1266.5 V210" fill="#fafafa" stroke="#222" stroke-width="1"/>
  <rect x="1258" y="213" width="4" height="6.5" fill="none" stroke="#222" stroke-width="0.9"/>
 </g>
 <g fill="#fafafa" stroke="#222" stroke-width="0.9">
  <path d="M1251.5 231 L1254.5 228.5 L1257.5 231 V244 H1251.5 Z"/><path d="M1255.5 230 L1258.5 227.5 L1261.5 230 V243.5 H1255.5 Z"/><path d="M1259.5 229 L1262.5 226.5 L1265.5 229 V243 H1259.5 Z"/>
 </g>
 <g>
  <path d="M1251.5 253 H1256 L1257.5 255 H1266 V267.5 H1251.5 Z" fill="#eee" stroke="#333" stroke-width="0.9"/>
  <path d="M1251.5 267.5 L1254.5 259 H1268.5 L1265.5 267.5 Z" fill="#fafafa" stroke="#333" stroke-width="0.9"/>
 </g>
 <g>
  <rect x="1251.5" y="276.5" width="16" height="16" fill="#f4f4f4" stroke="#333" stroke-width="0.9"/>
  <path d="M1253.5 279.5 H1261.5 V282.5 H1258.5 V290.5 H1256.5 V282.5 H1253.5 Z" fill="#f0c419" stroke="#333" stroke-width="0.7"/>
  <rect x="1263" y="279" width="3" height="3" fill="#333"/><rect x="1263" y="284" width="3" height="6" fill="#999" stroke="#333" stroke-width="0.5"/>
 </g>
 <g transform="translate(1260,308.5)">
  <path d="M0 0 L-8 0 A8 8 0 0 1 -1 -8 Z" fill="#2f7fd6"/><path d="M0 0 L-1 -8 A8 8 0 0 1 8 -1 Z" fill="#d42a2a"/>
  <path d="M0 0 L8 -1 A8 8 0 0 1 -1 8 Z" fill="#f1c21b"/><path d="M0 0 L-1 8 A8 8 0 0 1 -8 0 Z" fill="#3aa63a"/>
 </g>
 <rect x="1251.5" y="324.5" width="17" height="16" rx="1" fill="#f4f4f4" stroke="#222" stroke-width="1"/>
 <rect x="1252" y="325" width="16" height="2.5" fill="#3d8fc4"/>
 <g fill="#1d5d8a"><rect x="1253.5" y="329" width="3.5" height="2"/><rect x="1253.5" y="333" width="3.5" height="2"/><rect x="1253.5" y="337" width="3.5" height="2"/></g>
 <path d="M1258.5 330 H1266 M1258.5 334 H1266 M1258.5 338 H1266" stroke="#333" stroke-width="0.9"/>
</svg>
<div class="t" style="left:296px;top:157px;font-size:12px;color:#111">零件1&nbsp; (默认)&nbsp; <span style="font-size:9px;vertical-align:1px">&lt; &lt;</span>默认<span style="font-size:9px;vertical-align:1px"> &gt;</span> _...</div>
<div class="t" style="left:650px;top:458px;font-size:12px;color:#7a7a7a">前视基准面</div>
<div class="t" style="left:262px;top:760px;font-size:13px;font-weight:bold;color:#111;letter-spacing:1px"><span style="font-size:17px;vertical-align:-4px;font-weight:bold">*</span>等轴测</div>

<!-- left panel -->
<div id="panel" class="a" style="left:8px;top:146px;width:243px;height:632px;background:#f7f7f7;border-right:1px solid #7a7a7a"></div>

<!-- tabs row -->



<!-- tabs content -->
<div class="a" style="left:8px;top:125px;width:916px;height:21px;background:#d6d6d6;border-bottom:1px solid #707070"></div>
<div class="a" style="left:8px;top:125px;width:56px;height:21px;background:#d6d6d6;border-left:1px solid #7a7a7a;border-right:1px solid #7a7a7a;border-bottom:1px solid #707070;"></div>
<div class="t" style="left:8px;width:55px;text-align:center;top:127.6px;font-size:13px;color:#111">特征</div>
<div class="a" style="left:63px;top:125px;width:58px;height:21px;background:#f7f7f7;border-left:1px solid #7a7a7a;border-right:1px solid #7a7a7a;border-bottom:1px solid #f7f7f7;"></div>
<div class="t" style="left:63px;width:57px;text-align:center;top:127.6px;font-size:13px;color:#111">草图</div>
<div class="a" style="left:120px;top:125px;width:57px;height:21px;background:#d6d6d6;border-left:1px solid #7a7a7a;border-right:1px solid #7a7a7a;border-bottom:1px solid #707070;"></div>
<div class="t" style="left:120px;width:56px;text-align:center;top:127.6px;font-size:13px;color:#111">标注</div>
<div class="a" style="left:176px;top:125px;width:57px;height:21px;background:#d6d6d6;border-left:1px solid #7a7a7a;border-right:1px solid #7a7a7a;border-bottom:1px solid #707070;"></div>
<div class="t" style="left:176px;width:56px;text-align:center;top:127.6px;font-size:13px;color:#111">评估</div>
<div class="a" style="left:232px;top:125px;width:107px;height:21px;background:#d6d6d6;border-left:1px solid #7a7a7a;border-right:1px solid #7a7a7a;border-bottom:1px solid #707070;"></div>
<div class="a" style="left:338px;top:125px;width:118.5px;height:21px;background:#d6d6d6;border-left:1px solid #7a7a7a;border-right:1px solid #7a7a7a;border-bottom:1px solid #707070;"></div>
<div class="a" style="left:455.5px;top:125px;width:57.5px;height:21px;background:#d6d6d6;border-left:1px solid #7a7a7a;border-right:1px solid #7a7a7a;border-bottom:1px solid #707070;"></div>
<div class="a" style="left:512px;top:125px;width:121.5px;height:21px;background:#d6d6d6;border-left:1px solid #7a7a7a;border-right:1px solid #7a7a7a;border-bottom:1px solid #707070;"></div>
<div class="a" style="left:632.5px;top:125px;width:146.5px;height:21px;background:#d6d6d6;border-left:1px solid #7a7a7a;border-right:1px solid #7a7a7a;border-bottom:1px solid #707070;"></div>
<div class="a" style="left:778px;top:125px;width:146.5px;height:21px;background:#d6d6d6;border-left:1px solid #7a7a7a;border-right:1px solid #7a7a7a;border-bottom:1px solid #707070;"></div>
<div class="a" style="left:64px;top:124px;width:55px;height:1px;background:#f7f7f7"></div>
<svg class="a" style="left:0;top:120px" width="1281" height="30" viewBox="0 120 1281 30" font-family="Liberation Sans" font-size="12.5" fill="#111">
<text x="241.6" y="140" textLength="89" lengthAdjust="spacingAndGlyphs">MBD Dimensions</text>
<text x="347.2" y="140" textLength="100.6" lengthAdjust="spacingAndGlyphs">SOLIDWORKS 插件</text>
<text x="471.25" y="140" textLength="25.6" lengthAdjust="spacingAndGlyphs">MBD</text>
<text x="520.3" y="140" textLength="101.6" lengthAdjust="spacingAndGlyphs">SOLIDWORKS CAM</text>
<text x="641.2" y="140" textLength="128.7" lengthAdjust="spacingAndGlyphs">SOLIDWORKS CAM TBM</text>
<text x="785.8" y="140" textLength="129.4" lengthAdjust="spacingAndGlyphs">SOLIDWORKS Inspection</text>
</svg>
<!-- panel content -->
<div class="a" style="left:8px;top:146px;width:241px;height:1px;background:#c9d6dc"></div>
<div class="a" style="left:8px;top:147px;width:241px;height:4px;background:#f7f7f7"></div>
<div class="a" style="left:8px;top:151px;width:241px;height:1px;background:#b4b4b4"></div>
<div class="a" style="left:8px;top:166px;width:241px;height:1px;background:#c4c4c4"></div>
<div class="a" style="left:125.5px;top:156.5px;width:5px;height:5px;border-radius:50%;background:#d0d0d0;border:1px solid #999"></div>
<div class="a" style="left:9px;top:171px;width:240px;height:26px;background:#d4d4d4;border-top:1px solid #747474;border-bottom:1px solid #888"></div>
<div class="a" style="left:49px;top:171px;width:41px;height:26px;background:#f7f7f7;border-left:1px solid #747474;border-right:1px solid #747474;border-top:1px solid #747474"></div>
<div class="a" style="left:129px;top:171px;width:1px;height:25px;background:#747474"></div>
<div class="a" style="left:169px;top:171px;width:1px;height:25px;background:#747474"></div>
<div class="a" style="left:209px;top:171px;width:1px;height:25px;background:#747474"></div>
<div class="a" style="left:9px;top:171px;width:1px;height:25px;background:#747474"></div>
<div class="a" style="left:210px;top:176px;width:39px;height:21px;background:#f0f0f0;border-top:1px solid #9a9a9a"></div>
<div class="a" style="left:210px;top:177px;width:20px;height:20px;background:#e6e6e6;border:1px solid #b0b0b0"></div>
<div class="a" style="left:230px;top:177px;width:19px;height:20px;background:#e6e6e6;border:1px solid #b0b0b0"></div>
<svg class="a" style="left:0;top:140px" width="260" height="180" viewBox="0 140 260 180">
 <defs>
  <radialGradient id="gball" cx="0.35" cy="0.3" r="0.8"><stop offset="0" stop-color="#fff" stop-opacity="0.7"/><stop offset="0.4" stop-color="#fff" stop-opacity="0"/></radialGradient>
 </defs>
 <!-- tab 6 partial -->
 <rect x="219" y="173" width="20" height="1.6" fill="#2a78a8"/>
 <path d="M221 180.5 L217.5 183.5 L221 186.5 Z M237.5 180.5 L241 183.5 L237.5 186.5 Z" fill="#111"/>
 <!-- part icon -->
 <g transform="translate(-253.0,23.0)" stroke="#4a3600" stroke-width="0.9" stroke-linejoin="round">
  <path d="M275.5 157.3 L278.5 156.2 L278.7 154 L283.3 152.3 L287.6 153.8 V158.3 L291.4 160.2 V166.1 L286.2 169.1 L275.5 161.8 Z" fill="#f4c81e"/>
  <path d="M278.7 154 L282.5 155.4 L287.6 153.8 L283.3 152.3 Z" fill="#fbe88a" stroke="none"/>
  <path d="M282.5 155.4 L287.6 153.8 V158.3 L282.5 160.2 Z" fill="#f9e46a" stroke="none"/>
  <path d="M282.5 160.2 L287.6 158.3 L291.4 160.2 L286.2 162.4 Z" fill="#fbe88a" stroke="none"/>
  <path d="M286.2 162.4 L291.4 160.2 V166.1 L286.2 169.1 Z" fill="#f9e46a" stroke="none"/>
  <path d="M275.5 157.3 L278.5 156.2 L278.7 154 L283.3 152.3 L287.6 153.8 V158.3 L291.4 160.2 V166.1 L286.2 169.1 L275.5 161.8 Z" fill="none"/>
  <path d="M278.7 154 L282.5 155.4 L287.6 153.8 M282.5 155.4 V160.2 L286.2 162.4 L291.4 160.2 M286.2 162.4 V169.1 M282.5 160.2 L287.6 158.3" fill="none" stroke-width="0.7"/>
 </g>
 <!-- property manager icon -->
 <rect x="61.5" y="175.5" width="17" height="17" rx="1.5" fill="#f4f4f4" stroke="#222" stroke-width="1"/>
 <rect x="62" y="176" width="16" height="2.5" fill="#3d8fc4"/>
 <g fill="#1d5d8a"><rect x="63.5" y="180.5" width="4" height="2"/><rect x="63.5" y="184.5" width="4" height="2"/><rect x="63.5" y="188.5" width="4" height="2"/></g>
 <path d="M69 181.5 H76 M69 185.5 H76 M69 189.5 H76" stroke="#333" stroke-width="0.9"/>
 <!-- config manager -->
 <g fill="#fff" stroke="#222" stroke-width="1">
  <path d="M103.5 175.5 V193"/><path d="M103.5 180 H108 M103.5 189.5 H108"/>
  <rect x="106.5" y="176.5" width="6" height="6.5" rx="1"/><rect x="108" y="186.5" width="6" height="6.5" rx="1"/>
 </g>
 <!-- crosshair -->
 <g fill="none" stroke="#111" stroke-width="1.6">
  <circle cx="150" cy="183.7" r="6"/><path d="M150 175 V192.5 M141 183.7 H159"/>
 </g>
 <!-- display manager ball -->
 <g transform="translate(190,183.3)">
  <path d="M0 0 L-9 0 A9 9 0 0 1 -1 -8.9 Z" fill="#2f7fd6"/>
  <path d="M0 0 L-1 -8.9 A9 9 0 0 1 8.9 -1 Z" fill="#d42a2a"/>
  <path d="M0 0 L8.9 -1 A9 9 0 0 1 -1 9 Z" fill="#f1c21b"/>
  <path d="M0 0 L-1 9 A9 9 0 0 1 -9 0 Z" fill="#3aa63a"/>
  <ellipse cx="3.6" cy="-3.4" rx="2.4" ry="4.2" transform="rotate(-30 3.6 -3.4)" fill="#222"/>
  <circle r="9" fill="url(#gball)"/>
 </g>
 <!-- help -->
 <circle cx="229" cy="212.7" r="6.6" fill="#fafafa" stroke="#333" stroke-width="1"/>
 <text x="229" y="217" text-anchor="middle" font-family="Liberation Sans" font-weight="bold" font-size="11" fill="#1f6a9a">?</text>
 <!-- red x -->
 <path d="M18.5 235 L27.5 244.5 M27.5 235 L18.5 244.5" stroke="#e0190f" stroke-width="2"/>
 <!-- info caret -->
 <path d="M230.5 277.8 L235 273.3 L239.5 277.8" fill="none" stroke="#5a5a5a" stroke-width="2"/>
</svg>
<div class="t" style="left:60px;width:112px;text-align:center;top:205.5px;font-size:13.8px;font-weight:bold;color:#111">编辑草图</div>
<div class="a" style="left:13px;top:261px;width:230px;height:1px;background:#9a9a9a"></div>
<div class="t" style="left:17px;top:267.5px;font-size:14px;font-weight:bold;color:#3c3c3c">信息</div>
<div class="a" style="left:13px;top:289px;width:230px;height:21px;background:#ffff8c"></div>
<div class="t" style="left:17px;top:289px;font-size:13px;color:#111">选择一基准面为实体生成草图。</div>
<!-- splitter handle -->
<div class="a" style="left:249px;top:431px;width:10px;height:39px;background:#f7f7f7;border:1px solid #7a7a7a;border-left:none"></div>
<div class="a" style="left:251px;top:447px;width:6px;height:6px;border-radius:50%;background:#d6d6d6;border:1px solid #999"></div>

<!-- bottom tabs content -->
<div class="a" style="left:8px;top:777px;width:1265px;height:16px;background:#fbfbfb;border-top:1px solid #9a9a9a;border-bottom:1px solid #9a9a9a"></div>
<div class="a" style="left:8px;top:774px;width:242px;height:1px;background:#c4c4c4"></div>
<div class="a" style="left:8px;top:777px;width:2px;height:15px;background:#a6c8cc"></div>
<div class="a" style="left:10px;top:777px;width:64px;height:15px;background:#a8aaae;border-top:1px solid #111"></div>
<svg class="a" style="left:0;top:770px" width="300" height="30" viewBox="0 770 300 30">
 <g fill="#e4e4e4"><rect x="25" y="778" width="1" height="14"/><rect x="41" y="778" width="1" height="14"/><rect x="57" y="778" width="1" height="14"/><rect x="73" y="778" width="1" height="14"/></g>
 <g fill="#8a8a8a">
  <rect x="14" y="781" width="1.3" height="8"/><path d="M20.2 781 L15.5 785 L20.2 789 Z"/>
  <path d="M35 781 L30 785 L35 789 Z"/><path d="M48 781 L53 785 L48 789 Z"/>
  <path d="M63.5 781 L68.3 785 L63.5 789 Z"/><rect x="68.5" y="781" width="1.3" height="8"/>
 </g>
</svg>
<div class="a" style="left:74px;top:778px;width:48px;height:14px;background:#fff;border-left:1px solid #888"></div>
<div class="a" style="left:122px;top:778px;width:59px;height:14px;background:#d6d6d6;border-left:1px solid #888;border-right:1px solid #888"></div>
<div class="a" style="left:181px;top:778px;width:84px;height:14px;background:#d6d6d6;border-right:1px solid #888"></div>
<div class="t" style="left:86px;top:778px;font-size:13px;color:#111">模型</div>
<div class="t" style="left:130px;top:778px;font-size:13px;color:#111">3D 视图</div>
<div class="t" style="left:189px;top:778px;font-size:13px;color:#111">运动算例 1</div>
<div class="a" style="left:8px;top:793px;width:1265px;height:18px;background:#f7f7f7"></div>
<svg class="a" style="left:0;top:790px" width="1281" height="25" viewBox="0 790 1281 25">
 <text x="9" y="808" font-family="Liberation Sans" font-size="13" fill="#111" textLength="202" lengthAdjust="spacingAndGlyphs">SOLIDWORKS Premium 2024 SP0.1</text>
 <path d="M1203 806 H1209 L1206 802.5 Z" fill="#333"/>
 <path d="M1063.5 806 L1068 798 L1072.5 806 Z" fill="#f5c518" stroke="#333" stroke-width="0.7"/>
 <g fill="#1d5d8a"><rect x="1063" y="807" width="2" height="2"/><rect x="1066" y="805" width="2" height="4"/><rect x="1069" y="807" width="2" height="2"/><rect x="1072" y="804" width="2" height="5"/></g>
 <path d="M1071 803 L1076 798 M1073 798 H1076 V801" fill="none" stroke="#222" stroke-width="1.1"/>
 <path d="M1236 801 L1244 798 L1250.5 802.5 L1250.5 805 L1243 809 L1236 805 Z" fill="#e8e8e8" stroke="#333" stroke-width="0.9"/>
 <path d="M1236 801 L1243 805.5 L1250.5 802.5 M1243 805.5 V809" fill="none" stroke="#333" stroke-width="0.9"/>
 <rect x="1240" y="800" width="4" height="2.5" fill="#333" transform="rotate(25 1242 801)"/>
 <g fill="#b4b4b4"><rect x="1267" y="806" width="2" height="2"/><rect x="1263" y="806" width="2" height="2"/><rect x="1267" y="802" width="2" height="2"/><rect x="1259" y="806" width="2" height="2"/><rect x="1263" y="802" width="2" height="2"/><rect x="1267" y="798" width="2" height="2"/></g>
</svg>
<div class="t" style="left:970px;top:797px;font-size:13px;color:#111">在编辑 零件</div>
<div class="t" style="left:1150px;top:797px;font-size:13px;color:#111">自定义</div>

<!-- bottom tabs -->

</body></html>
